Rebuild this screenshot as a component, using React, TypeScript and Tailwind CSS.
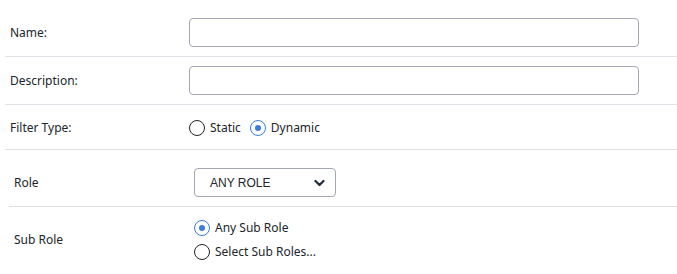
import { useState } from 'react';

function Radio({ checked, label, onClick }: { checked: boolean; label: string; onClick: () => void }) {
  return (
    <label className="flex items-center gap-[5px] cursor-pointer" onClick={onClick}>
      <span
        className={`flex h-[16px] w-[16px] items-center justify-center rounded-full border-[1.5px] ${
          checked ? 'border-[#3b7ddd]' : 'border-[#222]'
        }`}
      >
        {checked && <span className="h-[6px] w-[6px] rounded-full bg-[#3b7ddd]" />}
      </span>
      <span className="text-[12px] leading-4 text-[#212529]">{label}</span>
    </label>
  );
}

export default function App() {
  const [filterType, setFilterType] = useState<'static' | 'dynamic'>('dynamic');
  const [subRole, setSubRole] = useState<'any' | 'select'>('any');

  return (
    <div className="h-[274px] w-[677px] bg-white font-['Noto_Sans',sans-serif] leading-4 text-[#212529]">
      {/* Name */}
      <div className="ml-[5px] flex items-center border-b border-[#dee2e6] pt-[18px] pb-[9px]">
        <div className="w-[184px] pl-[5px] text-[12px] leading-4">Name:</div>
        <input className="h-[29px] w-[450px] rounded-[4px] border border-[#a3a6b4] px-2 text-[12px] outline-none" />
      </div>

      {/* Description */}
      <div className="ml-[5px] flex items-center border-b border-[#dee2e6] pt-[9px] pb-[9px]">
        <div className="w-[184px] pl-[5px] text-[12px] leading-4">Description:</div>
        <input className="h-[29px] w-[450px] rounded-[4px] border border-[#a3a6b4] px-2 text-[12px] outline-none" />
      </div>

      {/* Filter type */}
      <div className="ml-[5px] flex items-center border-b border-[#dee2e6] pt-[15px] pb-[13px]">
        <div className="w-[184px] pl-[5px] text-[12px] leading-4">Filter Type:</div>
        <div className="flex items-center gap-[9px]">
          <Radio checked={filterType === 'static'} label="Static" onClick={() => setFilterType('static')} />
          <Radio checked={filterType === 'dynamic'} label="Dynamic" onClick={() => setFilterType('dynamic')} />
        </div>
      </div>

      {/* Role */}
      <div className="ml-[9px] flex items-center border-b border-[#dee2e6] pt-[18px] pb-[9px]">
        <div className="w-[185px] pl-[5px] text-[12px] leading-4">Role</div>
        <button className="flex h-[29px] w-[142px] items-center justify-between rounded-[4px] border border-[#a3a6b4] pl-[15px] pr-[10px] font-['Liberation_Sans',sans-serif] text-[12px] leading-4 text-[#212529]">
          <span>ANY ROLE</span>
          <svg width="11" height="8" viewBox="0 0 11 8" fill="none">
            <path d="M1.5 2l4 4 4-4" stroke="#1f2937" strokeWidth="2.2" strokeLinecap="round" strokeLinejoin="round" />
          </svg>
        </button>
      </div>

      {/* Sub role */}
      <div className="ml-[9px] flex items-center pt-[13px]">
        <div className="w-[185px] pl-[5px] text-[12px] leading-4">Sub Role</div>
        <div className="flex flex-col gap-[8px]">
          <Radio checked={subRole === 'any'} label="Any Sub Role" onClick={() => setSubRole('any')} />
          <Radio checked={subRole === 'select'} label="Select Sub Roles..." onClick={() => setSubRole('select')} />
        </div>
      </div>
    </div>
  );
}
